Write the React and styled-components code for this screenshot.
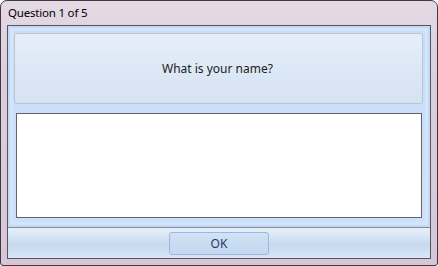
import React from 'react';
import styled, { createGlobalStyle } from 'styled-components';

const GlobalStyle = createGlobalStyle`
  html, body {
    margin: 0;
    padding: 0;
    background: #ffffff;
  }
  body {
    font-family: "Segoe UI", "Noto Sans", "Liberation Sans", sans-serif;
  }
`;

const Window = styled.div`
  box-sizing: border-box;
  width: 438px;
  height: 266px;
  border: 1px solid #3c3a3e;
  border-radius: 7px 7px 3px 3px;
  background: linear-gradient(180deg, #e4d9e4 0%, #dccddc 30%, #d8c6d8 100%);
  display: flex;
  flex-direction: column;
  padding: 0 6px 6px 6px;
  overflow: hidden;
`;

const TitleBar = styled.div`
  height: 24px;
  display: flex;
  align-items: center;
  padding-left: 1px;
  font-size: 11.5px;
  letter-spacing: -0.2px;
  color: #000;
  padding-bottom: 2px;
`;

const Client = styled.div`
  flex: 1;
  display: flex;
  flex-direction: column;
  border: 1px solid #55565a;
  background: #d6e5f7;
`;

const Body = styled.div`
  flex: 1;
  display: flex;
  flex-direction: column;
  padding: 7px 7px 9px 6px;
  background: linear-gradient(180deg, #c9ddf9 0%, #cde0f9 100%);
  box-shadow: inset 0 0 0 2px #c3d9f8, inset 0 0 0 5px #d4e5fb;
`;

const QuestionPanel = styled.div`
  height: 69px;
  border: 1px solid #b9c4d0;
  border-radius: 3px;
  background: linear-gradient(180deg, #e6eef9 0%, #dde8f6 50%, #d6e3f3 100%);
  display: flex;
  align-items: center;
  justify-content: center;
  font-size: 12px;
  color: #1b1b1b;
  padding-right: 2px;
`;

const AnswerBox = styled.textarea`
  box-sizing: border-box;
  margin: 9px 2px 0 2px;
  width: 406px;
  height: 105px;
  border: 1px solid #646464;
  background: #ffffff;
  resize: none;
  outline: none;
  font: inherit;
`;

const ButtonBar = styled.div`
  height: 30px;
  border-top: 1px solid #8a8c90;
  background: linear-gradient(180deg, #e6eff9 0%, #d4e3f3 35%, #c6d9ee 55%, #d8e6f6 100%);
  display: flex;
  align-items: center;
  justify-content: center;
`;

const OkButton = styled.button`
  box-sizing: border-box;
  width: 100px;
  height: 23px;
  border: 1px solid #97b8e0;
  border-radius: 3px;
  background: linear-gradient(180deg, #d3e3f5 0%, #c8dbf1 50%, #c4d8f0 100%);
  color: #1e3a64;
  font-family: inherit;
  font-size: 12px;
  padding: 0;
`;

export default function App() {
  return (
    <>
      <GlobalStyle />
      <Window>
        <TitleBar>Question 1 of 5</TitleBar>
        <Client>
          <Body>
            <QuestionPanel>What is your name?</QuestionPanel>
            <AnswerBox />
          </Body>
          <ButtonBar>
            <OkButton>OK</OkButton>
          </ButtonBar>
        </Client>
      </Window>
    </>
  );
}
